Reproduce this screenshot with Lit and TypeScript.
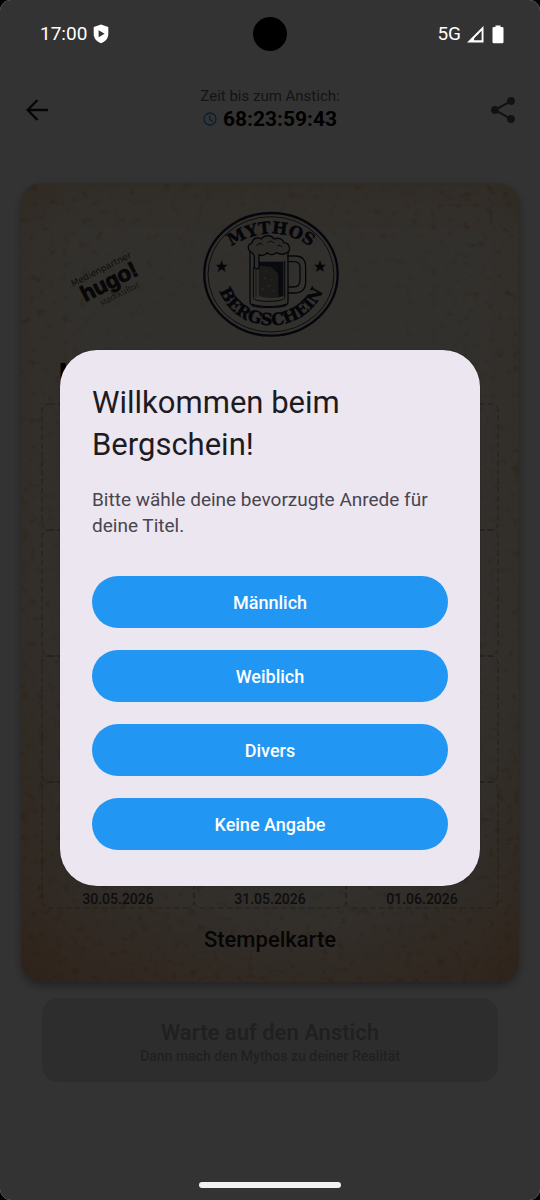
import { LitElement, html, svg, css } from "lit";
import { customElement, state } from "lit/decorators.js";

@customElement("status-bar")
class StatusBar extends LitElement {
  static styles = css`
    :host {
      display: grid;
      grid-template-columns: 1fr auto 1fr;
      align-items: center;
      height: 68px;
      padding: 0 34px;
      color: #fff;
      font-size: 19px;
      line-height: 24px;
    }
    .left,
    .right {
      display: flex;
      align-items: center;
      gap: 6px;
    }
    .left {
      padding-left: 6px;
    }
    .right {
      justify-content: flex-end;
    }
    .camera {
      width: 34px;
      height: 34px;
      border-radius: 50%;
      background: #000;
    }
    svg {
      display: block;
    }
  `;

  render() {
    return html`
      <div class="left">
        <span>17:00</span>
        <svg width="16" height="20" viewBox="0 0 16 20" aria-hidden="true">
          <path
            d="M8 .5 15.3 3v7c0 4.300-3 7.700-7.300 9.300C3.700 17.700.7 14.300.7 10V3Z"
            fill="#fff"
          />
          <path d="M5.600 6.300 11.600 9.800 5.600 13.300Z" fill="#333" />
        </svg>
      </div>
      <div class="camera"></div>
      <div class="right">
        <span>5G</span>
        <svg width="17" height="17" viewBox="0 0 17 17" aria-hidden="true">
          <path d="M16.500 0v16.500H0Z" fill="#fff" />
          <path d="M14.600 4.700v9.500H7V12.500Z" fill="#333" />
        </svg>
        <svg width="16" height="19" viewBox="0 0 16 19" aria-hidden="true">
          <path
            d="M5.500.5h5v1.500h1.700a1.300 1.300 0 0 1 1.300 1.300v13.700a1.300 1.300 0 0 1-1.300 1.300H3.800a1.300 1.300 0 0 1-1.300-1.300V3.300A1.300 1.300 0 0 1 3.800 2h1.700Z"
            fill="#fff"
          />
        </svg>
      </div>
    `;
  }
}

@customElement("countdown-bar")
class CountdownBar extends LitElement {
  static styles = css`
    :host {
      display: grid;
      grid-template-columns: 48px 1fr 48px;
      align-items: center;
      height: 84px;
      padding: 0 13px;
      color: #1c1b1f;
    }
    button {
      display: grid;
      place-items: center;
      width: 48px;
      height: 48px;
      padding: 0;
      border: 0;
      background: none;
      color: inherit;
    }
    .share {
      color: #5a585e;
    }
    .center {
      display: flex;
      flex-direction: column;
      align-items: center;
      padding-bottom: 2px;
    }
    .label {
      font-size: 15px;
      line-height: 20px;
      color: #67636d;
    }
    .timer {
      display: flex;
      align-items: center;
      gap: 6px;
      font-size: 21px;
      line-height: 26px;
      font-weight: 700;
      color: #000;
    }
  `;

  render() {
    return html`
      <button aria-label="Zurück">
        <svg width="24" height="24" viewBox="0 0 24 24" aria-hidden="true">
          <path
            d="M12.500 2 2.700 12 12.500 22M2.700 12H23"
            fill="none"
            stroke="currentColor"
            stroke-width="2.400"
          />
        </svg>
      </button>
      <div class="center">
        <span class="label">Zeit bis zum Anstich:</span>
        <span class="timer">
          <svg width="14" height="14" viewBox="0 0 14 14" aria-hidden="true">
            <g fill="none" stroke="#2196f3" stroke-width="1.300">
              <circle cx="7" cy="7" r="6" />
              <path d="M6.800 3.500v4l3 2" />
            </g>
          </svg>
          68:23:59:43
        </span>
      </div>
      <button class="share" aria-label="Teilen">
        <svg width="24" height="28" viewBox="0 0 24 28" aria-hidden="true">
          <path
            d="M20 5 4 14l16 9"
            fill="none"
            stroke="currentColor"
            stroke-width="2.200"
          />
          <g fill="currentColor">
            <circle cx="20" cy="5" r="3.900" />
            <circle cx="4" cy="14" r="3.900" />
            <circle cx="20" cy="23" r="3.900" />
          </g>
        </svg>
      </button>
    `;
  }
}

const star = (x: number, y: number) => svg`
  <path
    transform="translate(${x} ${y})"
    d="M0-19 5-6 18-6 8 3 12 16 0 8-12 16-8 3-18-6-5-6Z"
    fill="#172039"
  />
`;

@customElement("stamp-card")
class StampCard extends LitElement {
  static styles = css`
    :host {
      display: block;
      position: relative;
      overflow: hidden;
      border-radius: 21px;
      padding: 27px 21px 29px;
      color: #1c1b1f;
      background:
        radial-gradient(ellipse at 0 100%, rgba(220, 110, 40, 0.26), transparent 34%),
        radial-gradient(ellipse at 100% 100%, rgba(220, 110, 40, 0.26), transparent 26%),
        linear-gradient(to top, rgba(220, 120, 50, 0.26), transparent 11%),
        linear-gradient(to bottom, rgba(220, 140, 70, 0.2), transparent 7%),
        linear-gradient(to right, rgba(220, 140, 70, 0.16), transparent 12%),
        linear-gradient(to left, rgba(220, 140, 70, 0.14), transparent 8%),
        #fbf0df;
    }
    .grain {
      position: absolute;
      inset: 0;
      width: 100%;
      height: 100%;
    }
    .body {
      position: relative;
    }
    .logos {
      display: grid;
      grid-template-columns: 1fr auto 1fr;
      height: 130px;
    }
    .partner {
      margin: 32px 0 0 22px;
    }
    .heading {
      height: 64px;
      box-sizing: border-box;
      margin: 0;
      padding: 18px 17px 0;
      font-size: 24px;
      line-height: 28px;
      font-weight: 700;
      color: #000;
    }
    .days {
      display: grid;
      grid-template-columns: repeat(3, 1fr);
      grid-auto-rows: 126px;
      margin: 0;
      padding: 0;
      list-style: none;
    }
    .day {
      position: relative;
      display: flex;
      align-items: flex-end;
      justify-content: center;
      font-size: 14px;
      line-height: 18px;
      font-weight: 500;
      color: #49454f;
    }
    .outline {
      position: absolute;
      inset: 0;
      width: 100%;
      height: 100%;
      overflow: visible;
    }
    .title {
      margin: 0;
      padding-top: 19px;
      text-align: center;
      font-size: 22px;
      line-height: 26px;
      font-weight: 500;
    }
  `;

  private days = ["", "", "", "", "", "", "", "", "", "30.05.2026", "31.05.2026", "01.06.2026"];

  render() {
    return html`
      <svg class="grain" aria-hidden="true">
        <defs>
          <filter id="speck" x="0" y="0" width="100%" height="100%">
            <feTurbulence type="fractalNoise" baseFrequency="0.12" numOctaves="5" seed="8" />
            <feColorMatrix
              values="0 0 0 0 0.68  0 0 0 0 0.36  0 0 0 0 0.14  2.600 0 0 0 -1.500"
            />
          </filter>
          <radialGradient id="fade" cx="50%" cy="42%" r="66%">
            <stop offset="0.4" stop-color="#1c1c1c" />
            <stop offset="1" stop-color="#fff" />
          </radialGradient>
          <mask id="edges"><rect width="100%" height="100%" fill="url(#fade)" /></mask>
        </defs>
        <g mask="url(#edges)">
          <rect width="100%" height="100%" filter="url(#speck)" />
        </g>
      </svg>
      <div class="body">
        <div class="logos">
          <svg class="partner" width="88" height="72" viewBox="0 0 88 72" role="img" aria-label="Medienpartner hugo! stadtkultur">
            <g transform="translate(9 45) rotate(-27)" fill="#2a2a2a">
              <text x="0" y="0" font-family="DejaVu Sans, sans-serif" font-size="9" fill="#444">Medienpartner</text>
              <text x="4" y="19" font-family="Liberation Sans, sans-serif" font-weight="700" font-size="22" stroke="#2a2a2a" stroke-width="1">hugo!</text>
              <text x="17" y="30" font-family="Liberation Serif, serif" font-size="10" fill="#666">stadtkultur</text>
            </g>
          </svg>
          <svg width="140" height="130" viewBox="30 30 420 390" role="img" aria-label="Mythos Bergschein">
            <g fill="none" stroke="#172039">
              <ellipse cx="243" cy="223" rx="200" ry="184" stroke-width="7" />
              <ellipse cx="243" cy="223" rx="189" ry="173" stroke-width="2.500" />
            </g>
            <path id="top" d="M114 147Q243 54 372 147" fill="none" />
            <path id="bottom" d="M79 223A164 153 0 0 0 407 223" fill="none" />
            <g fill="#172039" stroke="#172039" stroke-width="1.500" font-family="DejaVu Serif, serif" font-weight="700" font-size="50" text-anchor="middle">
              <text><textPath href="#top" startOffset="50%">MYTHOS</textPath></text>
              <text><textPath href="#bottom" startOffset="50%">BERGSCHEIN</textPath></text>
            </g>
            ${star(95, 200)} ${star(390, 200)}
            <g stroke="#172039" stroke-width="4" stroke-linejoin="round" fill="none">
              <path d="M292 168h26c18 0 29 12 29 30v47c0 22-12 34-34 34h-20" />
              <path d="M294 185h18c13 0 18 6 18 17v38c0 13-7 21-20 21h-16" />
              <path d="M180 155v150c0 12 12 17 56 17s58-5 58-17V140" />
              <path d="M190 200v92c0 8 16 12 46 12s48-4 48-12v-110" stroke-width="3" />
              <path d="M206 185h74v103c-16 8-54 8-74 0Z" fill="#8d877f" stroke="none" />
              <path d="M206 185h74v103l-14 3-2-70-20-20-38-4Z" fill="#35384a" stroke="none" />
              <path d="M198 205v86M270 195v90" stroke-width="2" />
              <path
                d="M186 158c-16-8-14-26 0-29 2-15 18-19 28-12 8-14 32-12 38 0 16-6 28 2 29 11 20 0 22 26 10 30-10 7-24 4-32 0-10 9-24 6-28 0-6 10-18 10-24 6v36c0 9-14 9-14 0v-30c0-5-3-8-7-12Z"
                fill="#e6d9c8"
              />
              <path d="M200 138c2-8 12-10 18-4M232 130c4-8 16-8 20 0M262 138c6-4 12-2 14 4" stroke-width="3" />
              <path d="M186 312c25 10 78 10 102 0" stroke-width="3" />
            </g>
            <g fill="#e6d9c8">
              <circle cx="225" cy="235" r="3" /><circle cx="236" cy="258" r="3" />
              <circle cx="218" cy="268" r="3" /><circle cx="245" cy="240" r="2.500" />
              <circle cx="228" cy="212" r="2.500" /><circle cx="252" cy="272" r="2.500" />
            </g>
          </svg>
        </div>
        <h2 class="heading">M</h2>
        <ul class="days">
          ${this.days.map(
            (d) => html`<li class="day">
              <svg class="outline" aria-hidden="true">
                <rect width="100%" height="100%" rx="7" fill="none" stroke="#a89c8c" stroke-dasharray="6 3" />
              </svg>
              ${d}
            </li>`
          )}
        </ul>
        <h3 class="title">Stempelkarte</h3>
      </div>
    `;
  }
}

@customElement("salutation-dialog")
class SalutationDialog extends LitElement {
  static styles = css`
    :host {
      display: block;
      box-sizing: border-box;
      width: 100%;
      max-width: 560px;
      padding: 32px 32px 36px;
      border-radius: 37px;
      background: #ece6f0;
      box-shadow: 0 0 1px rgba(0, 0, 0, 0.8);
    }
    h1 {
      margin: 0 0 21px;
      font-size: 31px;
      line-height: 42px;
      font-weight: 400;
      color: #1c1b1f;
    }
    p {
      margin: 0 0 37px;
      font-size: 19px;
      line-height: 26px;
      color: #49454f;
    }
    .choices {
      display: flex;
      flex-direction: column;
      gap: 22px;
    }
    .choice {
      height: 52px;
      border: 0;
      border-radius: 26px;
      background: #2196f3;
      color: #fff;
      font-family: inherit;
      font-size: 18px;
      font-weight: 500;
      cursor: pointer;
    }
  `;

  @state() private selected = "";

  render() {
    return html`
      <h1>Willkommen beim Bergschein!</h1>
      <p>Bitte wähle deine bevorzugte Anrede für deine Titel.</p>
      <div class="choices">
        ${["Männlich", "Weiblich", "Divers", "Keine Angabe"].map(
          (c) => html`<button
            class="choice"
            aria-pressed=${this.selected === c}
            @click=${() => (this.selected = c)}
          >${c}</button>`
        )}
      </div>
    `;
  }
}

@customElement("app-root")
class AppRoot extends LitElement {
  static styles = css`
    :host {
      display: block;
      background: #000;
      font-family: Roboto, sans-serif;
    }
    .screen {
      position: relative;
      display: flex;
      flex-direction: column;
      min-height: 100vh;
      border-radius: 11px;
      overflow: hidden;
      background: #fff;
    }
    .page {
      display: flex;
      flex-direction: column;
      padding: 68px 21px 0;
    }
    .bar {
      margin: 0 -21px 31px;
    }
    .card {
      box-shadow: 0 4px 10px rgba(0, 0, 0, 0.35);
    }
    .wait {
      display: flex;
      flex-direction: column;
      align-items: center;
      justify-content: center;
      box-sizing: border-box;
      height: 84px;
      margin: 16px 21px 0;
      padding: 4px 0 0;
      border: 0;
      border-radius: 16px;
      background: #e1e1e2;
      color: #a0a0a2;
      font-family: inherit;
      font-weight: 600;
      font-size: 22px;
      line-height: 28px;
    }
    .note {
      font-size: 14px;
      line-height: 18px;
      font-weight: 500;
    }
    .overlay {
      position: absolute;
      inset: 0;
      display: flex;
      flex-direction: column;
      background: rgba(0, 0, 0, 0.8);
    }
    .stage {
      flex: 1;
      display: flex;
      align-items: center;
      justify-content: center;
      padding: 0 60px;
    }
    .home {
      align-self: center;
      width: 142px;
      height: 6px;
      margin: 14px 0 12px;
      border-radius: 3px;
      background: #f2f2f2;
    }
  `;

  render() {
    return html`
      <div class="screen">
        <main class="page" inert>
          <countdown-bar class="bar"></countdown-bar>
          <stamp-card class="card"></stamp-card>
          <button class="wait" disabled>
            <span>Warte auf den Anstich</span>
            <span class="note">Dann mach den Mythos zu deiner Realität</span>
          </button>
        </main>
        <div class="overlay">
          <status-bar></status-bar>
          <div class="stage">
            <salutation-dialog role="dialog" aria-modal="true"></salutation-dialog>
          </div>
          <div class="home"></div>
        </div>
      </div>
    `;
  }
}
